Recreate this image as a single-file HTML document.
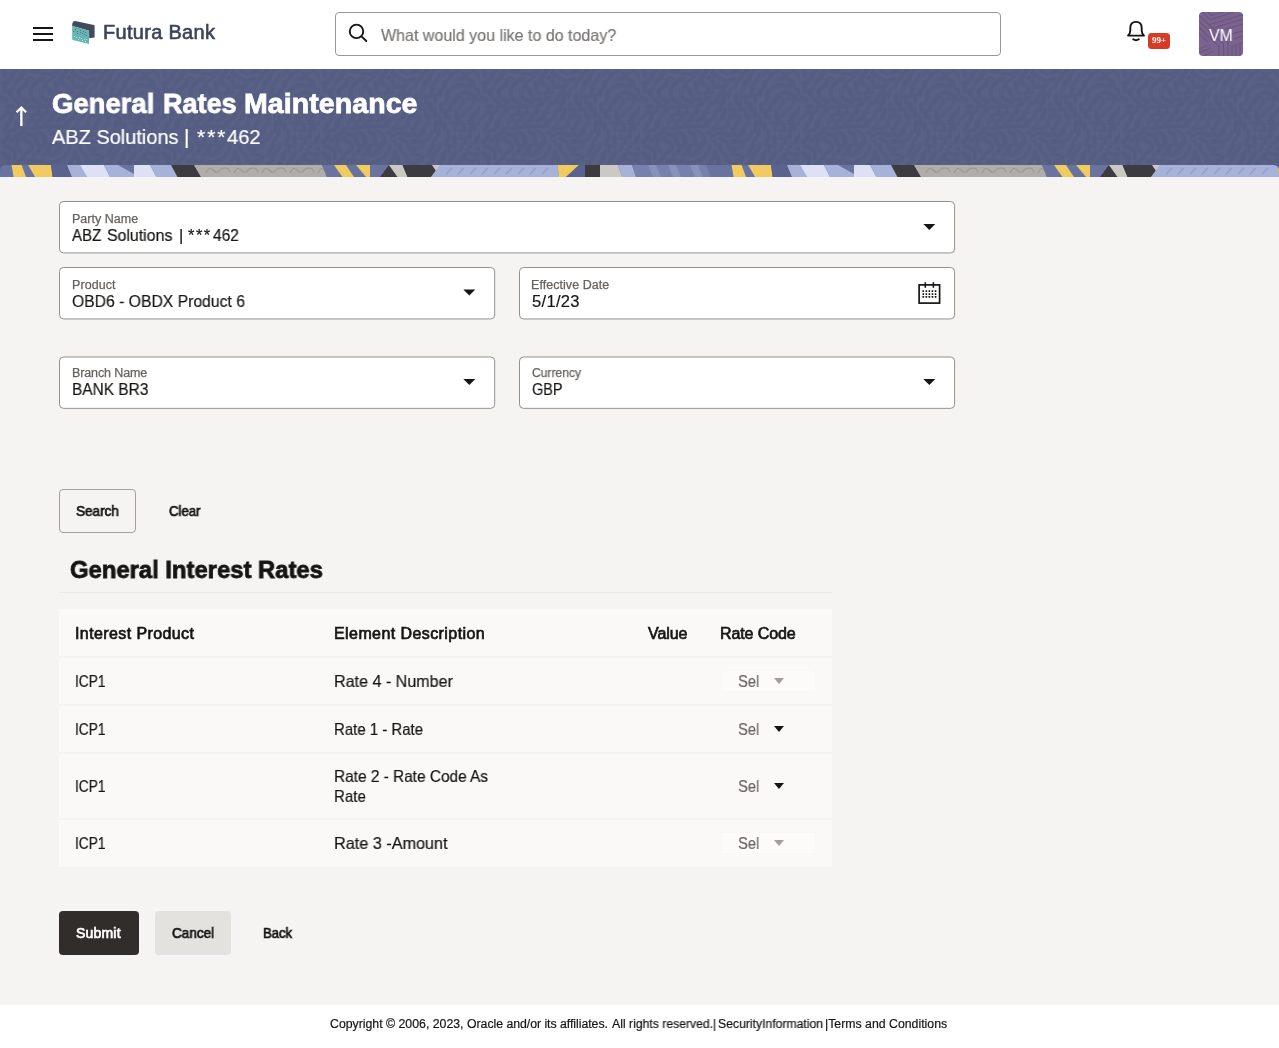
<!DOCTYPE html>
<html lang="en">
<head>
<meta charset="utf-8">
<title>General Rates Maintenance</title>
<style>
*{box-sizing:border-box;margin:0;padding:0}
html,body{width:1279px;height:1048px;overflow:hidden}
body{background:#f5f4f2;font-family:"Liberation Sans",sans-serif;color:#161513;position:relative}
.abs{position:absolute}
.t{position:absolute;white-space:nowrap;line-height:1.2;will-change:transform;transform-origin:0 0}
#hdr{position:absolute;left:0;top:0;width:1279px;height:69px;background:#fff}
.hb{position:absolute;left:33px;width:20px;height:2px;background:#161513}
#search{position:absolute;left:335px;top:12px;width:666px;height:44px;border:1px solid #9a9794;border-radius:4px;background:#fff}
#avatar{position:absolute;left:1199px;top:12px;width:44px;height:44px;border-radius:4px;background:#7b6390;overflow:hidden}
#badge{position:absolute;left:1148px;top:33px;width:22px;height:16px;border-radius:3.5px;background:#d63b25;color:#fff;font-family:"Liberation Serif",serif;font-weight:bold;font-size:9px;line-height:14px;text-align:center;will-change:transform}
#banner{position:absolute;left:0;top:69px;width:1279px;height:108px;background:#585f85}
#strip{position:absolute;left:0;top:165px;width:1279px;height:12px}
.fld{position:absolute;height:52px;border:1px solid #9d9a97;border-right-color:#c4c2bf;border-bottom-color:#d2d0cd;border-radius:4px;background:#fff}
.caret{position:absolute;width:0;height:0;border-left:6px solid transparent;border-right:6px solid transparent;border-top:6px solid #161513}
.btn{position:absolute;height:44px;border-radius:4px}
#tbl{position:absolute;left:59px;top:609px;width:773px;height:258px;background:#fbf9f8}
.ln{position:absolute;left:0;width:773px;height:2px;background:#f5f3f1}
.dis{position:absolute;left:662px;width:95px;height:22px;background:#fcfbfa;outline:1px dotted #f6f5f3;outline-offset:-1px}
#ftr{position:absolute;left:0;top:1005px;width:1279px;height:43px;background:#fff}
</style>
</head>
<body>
<div id="hdr">
  <div class="hb" style="top:27px"></div><div class="hb" style="top:33px"></div><div class="hb" style="top:39px"></div>
  <svg class="abs" style="left:71px;top:20px" width="24" height="24" viewBox="0 0 24 24">
    <path d="M1.2 5 Q1.2 0.9 4.2 0.9 L22.8 5 Q23.6 5.2 23.6 6 L23.6 17.6 L18.2 18.2 L18 10.8 L1.2 5.9 Z" fill="#444a5e"/>
    <path d="M1.2 5.7 L18 10.8 L18 23.9 L2 19.9 Q1.2 19.6 1.2 18.5 Z" fill="#62b7b1"/>
    <g fill="#6b5c9c"><rect x="4" y="9" width="1" height="1"/><rect x="6" y="11" width="1" height="1"/><rect x="9" y="10" width="1" height="1"/><rect x="9" y="12" width="1" height="1"/><rect x="12" y="11" width="1" height="1"/><rect x="14" y="12" width="1" height="1"/><rect x="6" y="13" width="1" height="1"/><rect x="11" y="13" width="1" height="1"/><rect x="13" y="14" width="1" height="1"/><rect x="15" y="15" width="1" height="1"/><rect x="2" y="11" width="1" height="1"/></g>
    <g fill="#d9cdf2"><rect x="3" y="16" width="1" height="1"/><rect x="5" y="17" width="1" height="1"/><rect x="8" y="17" width="1" height="1"/><rect x="10" y="18" width="1" height="1"/><rect x="7" y="19" width="1" height="1"/><rect x="13" y="19" width="1" height="1"/><rect x="15" y="19" width="1" height="1"/><rect x="11" y="20" width="1" height="1"/><rect x="14" y="21" width="1" height="1"/></g>
  </svg>
  <div id="search">
    <svg class="abs" style="left:11px;top:10px" width="22" height="22" viewBox="0 0 22 22" fill="none" stroke="#161513" stroke-width="1.9"><circle cx="9.5" cy="8.4" r="6.75"/><path d="M14.5 13.4 L19.3 18" stroke-linecap="round"/></svg>
  </div>
  <svg class="abs" style="left:1126px;top:20px" width="20" height="22" viewBox="0 0 20 22" fill="none" stroke="#161513" stroke-width="1.9" stroke-linecap="round" stroke-linejoin="round"><path d="M2 15.6 Q4.3 13.5 4.3 10.5 L4.3 8 Q4.3 1.9 10 1.9 Q15.7 1.9 15.7 8 L15.7 10.5 Q15.7 13.5 18 15.6 Z"/><path d="M7.2 19.3 Q10 21.2 12.8 19.3"/></svg>
  <div id="badge">99+</div>
  <div id="avatar"><svg width="44" height="44" viewBox="0 0 44 44" fill="none" stroke="#6b567f" stroke-width="1.2"><path d="M0 3.5 L29 30 L29 44 M0 9.5 L24.5 32 L24.5 44 M0 15.5 L20 34.5 L20 44 M0 21.5 L9 30 M3 0 L11 7.5 L35 0 M9 0 L12 3.5 L24 0 M11 12.5 L44 2.5 M14 16 L44 7 M26 17.5 L44 12 M33 22 L44 18.5 M35 27 L44 24 M33 34.5 L44 30.5 M33 34.5 L33 44 M37 33 L37 44 M41 31.5 L41 44 M0 37 L8.5 33.5 M0 41 L11 36.5 M4 44 L14 39.5"/></svg></div>
</div>
<div id="banner"></div>
<svg class="abs" style="left:0;top:69px" width="1279" height="96"><defs><pattern id="tx" width="160" height="96" patternUnits="userSpaceOnUse"><rect width="160" height="96" fill="#5a6187"/><path d="M4.5 -1.2l-0.1 7.5M15.9 1.1l-4.3 4.9M26.2 2.7l-5.1 1.6M37.6 2.4l-5.5 -0.1M47.6 4.0l-5.6 0.5M58.1 2.0l-7.9 3.5M67.4 -0.6l-4.2 7.6M73.0 1.2l1.3 6.1M81.4 0.6l5.1 3.7M92.4 3.6l7.1 -1.8M102.8 5.6l5.2 -4.9M112.0 4.8l3.4 -4.9M123.6 5.8l3.8 -5.0M132.6 4.9l5.4 -3.3M142.9 3.5l6.0 0.9M152.5 0.3l5.4 6.3M12.9 6.0l-4.5 7.5M22.1 7.8l-6.5 4.5M31.5 9.4l-5.1 1.7M43.8 9.4l-6.6 2.9M54.1 7.3l-5.9 5.0M61.2 7.2l-1.8 6.6M69.0 8.5l4.0 5.6M77.0 7.7l7.1 3.1M86.8 13.2l7.4 -3.5M96.7 12.8l5.2 -5.5M107.2 12.8l2.7 -5.1M116.9 12.7l3.8 -7.0M126.5 12.0l4.7 -4.6M137.7 9.5l6.8 -0.6M146.8 8.9l6.7 4.6M160.7 6.4l0.9 6.6M4.0 13.8l1.2 8.6M15.2 13.6l-2.5 5.5M26.5 14.2l-4.5 5.7M36.7 13.6l-4.8 4.7M46.2 13.3l-3.2 8.0M55.0 13.5l1.2 7.3M62.8 12.8l5.4 6.5M71.8 18.2l8.1 -0.4M82.2 18.2l4.9 -2.7M93.9 18.4l3.0 -4.6M103.1 19.4l2.0 -6.1M112.8 18.7l1.7 -5.5M122.5 19.1l2.7 -4.6M133.5 18.6l5.2 -2.4M141.0 16.4l6.5 0.8M150.7 14.9l6.4 6.0M9.0 21.3l1.8 5.2M18.6 20.5l0.4 6.1M31.1 20.5l-0.1 5.3M40.5 21.3l1.8 5.4M48.3 19.8l3.7 6.1M57.6 24.2l7.6 1.4M66.4 24.1l5.7 -1.0M78.2 27.0l5.3 -6.0M87.9 27.1l3.1 -7.5M101.3 28.9l0.3 -8.1M110.8 27.6l0.4 -6.0M119.3 26.2l1.5 -5.1M126.8 25.9l3.6 -5.0M137.4 26.3l6.4 -2.4M147.1 24.1l8.4 2.2M157.6 21.1l4.1 4.4M0.7 28.5l6.7 3.3M13.3 29.7l5.8 3.8M23.2 29.9l4.4 3.3M31.9 30.0l7.1 3.7M43.0 29.9l5.6 1.7M51.8 30.8l8.1 -0.7M63.7 32.4l5.5 -3.7M75.0 33.9l2.7 -5.1M82.8 34.1l2.2 -8.2M96.0 34.1l-0.2 -8.2M106.8 34.4l-0.6 -6.4M115.1 32.6l0.2 -5.2M125.2 34.5l2.4 -6.7M133.4 33.7l5.8 -6.0M143.1 31.1l5.8 -1.9M150.7 30.0l7.3 0.5M6.5 37.9l5.6 -0.7M17.8 37.3l6.8 0.1M26.9 39.1l6.7 -0.9M37.8 38.4l7.0 -1.5M46.9 37.7l6.4 -2.4M55.8 38.9l6.4 -4.9M67.0 41.0l4.0 -6.7M79.4 40.7l1.5 -6.9M90.2 41.1l-0.0 -5.6M100.6 40.1l-0.8 -6.1M111.2 41.3l-0.7 -7.2M120.6 42.1l0.3 -6.8M129.3 41.1l2.0 -6.8M138.5 40.5l4.1 -5.8M147.1 41.3l5.7 -5.1M158.3 40.0l5.6 -2.5M2.5 48.7l5.4 -6.2M11.1 45.5l5.7 -3.7M21.3 45.2l4.8 -2.7M31.9 47.4l7.2 -4.4M40.8 47.2l6.3 -4.2M50.7 48.3l6.5 -5.7M62.1 48.2l4.2 -5.2M73.1 49.4l3.7 -7.3M83.2 47.8l1.6 -6.9M94.4 47.0l0.3 -6.3M105.9 47.0l-0.4 -7.2M115.0 46.6l-0.3 -6.4M125.3 47.3l0.1 -5.4M135.7 49.5l1.4 -8.6M142.9 46.5l1.9 -5.0M154.2 46.3l3.3 -4.6M7.8 55.9l3.9 -7.1M16.4 53.7l5.7 -6.3M28.0 53.5l4.4 -3.4M35.8 53.6l5.7 -3.5M45.4 54.1l6.7 -3.4M57.6 52.9l6.6 -5.0M65.9 54.3l5.5 -4.0M76.8 54.8l5.4 -6.6M87.8 53.7l2.9 -6.5M98.6 53.3l1.3 -5.6M108.4 53.8l0.5 -6.3M119.5 55.1l-0.1 -6.2M130.1 53.8l-0.2 -6.4M138.5 53.4l0.1 -5.3M150.3 54.4l0.8 -5.8M159.1 55.1l1.6 -5.4M4.7 61.3l2.6 -6.5M13.8 60.7l4.5 -5.4M22.7 60.9l5.6 -3.1M32.4 59.6l7.3 -1.8M42.0 58.2l5.3 -0.8M50.0 57.7l7.8 -1.0M61.5 57.8l5.4 -0.8M72.3 59.8l7.5 -1.4M81.7 59.2l5.4 -3.2M92.7 60.0l4.4 -5.2M102.2 63.2l4.1 -7.7M114.6 61.9l1.1 -8.6M124.5 60.5l-0.2 -5.2M135.1 61.6l-0.9 -7.0M144.3 60.8l-0.5 -5.2M154.0 60.5l0.5 -6.6M6.7 66.4l3.9 -5.0M15.8 66.5l6.7 -2.4M26.9 64.7l7.6 1.5M38.3 63.4l5.7 2.9M48.2 62.1l6.5 4.3M57.0 61.8l6.9 4.4M67.8 63.3l6.7 4.1M77.4 63.8l7.0 0.9M86.0 66.4l8.0 -1.0M97.7 67.9l6.5 -5.3M109.2 68.2l2.8 -5.4M118.1 67.4l1.1 -6.4M128.9 69.5l-0.3 -7.2M140.7 69.2l-0.6 -7.6M149.8 67.9l0.3 -8.1M159.4 68.4l2.8 -6.6M2.2 73.1l6.5 -4.4M11.2 71.2l6.1 -0.6M22.4 69.1l6.6 4.3M35.1 68.9l2.6 6.0M44.6 68.4l0.8 7.9M55.3 69.5l0.1 5.5M63.1 67.5l1.8 7.7M73.2 69.8l2.5 4.6M80.5 69.3l6.4 4.1M92.5 72.6l6.2 -0.5M102.3 73.9l5.5 -4.1M112.4 75.4l2.9 -5.1M126.1 75.6l0.7 -5.2M134.6 77.0l0.6 -8.7M144.4 74.3l0.9 -5.9M154.4 74.4l3.8 -6.2M4.9 77.3l8.1 3.1M17.4 76.4l3.0 6.4M31.9 76.3l-1.5 5.8M42.6 76.5l-2.9 4.4M50.7 76.1l-4.3 5.3M61.0 75.1l-3.2 5.6M70.2 77.1l-1.4 5.0M79.7 77.0l2.2 5.2M87.4 77.5l7.7 3.5M96.1 78.9l6.5 -0.9M109.3 81.4l4.3 -4.8M118.7 80.7l2.1 -5.0M128.0 82.6l1.7 -6.0M140.2 81.0l2.3 -5.7M147.9 80.5l4.2 -5.0M157.3 80.0l8.1 -0.6M2.6 83.4l5.6 6.5M15.1 83.5l0.0 5.4M28.0 82.3l-4.7 6.4M37.8 83.8l-4.6 2.7M49.5 83.5l-6.5 2.4M58.1 83.5l-7.2 3.2M68.8 82.1l-4.7 5.9M75.0 82.5l-1.3 6.5M82.5 82.2l3.0 5.2M93.2 85.3l6.0 0.7M103.3 88.6l5.9 -3.5M112.2 87.0l3.5 -4.3M123.3 87.4l2.5 -5.5M132.1 89.4l4.3 -7.2M143.0 87.3l5.5 -3.8M151.9 85.4l6.4 -0.2M8.6 87.6l0.1 8.7M21.5 89.8l-5.2 5.4M34.1 91.1l-6.0 1.3M42.6 92.2l-6.8 0.0M55.5 92.8l-8.3 1.0M62.1 89.9l-7.2 3.0M72.5 89.0l-2.7 6.8M77.7 88.0l1.6 8.4M86.9 91.9l8.2 2.9M96.4 92.1l5.6 -1.1M107.0 96.0l6.1 -6.1M118.6 96.2l4.2 -6.7M128.3 94.7l3.2 -4.2M137.1 93.9l7.4 -4.2M147.6 91.7l5.6 0.6M156.7 89.9l5.1 5.8" stroke="#565d83" stroke-width="4.6" stroke-linecap="round" fill="none"/></pattern></defs><rect width="1279" height="96" fill="url(#tx)"/></svg>
<svg id="strip" width="1279" height="12" viewBox="0 0 1279 12" preserveAspectRatio="none"><clipPath id="cp"><path d="M0 12 V6 Q0 0 6 0 H1273 Q1279 0 1279 6 V12 Z"/></clipPath><g clip-path="url(#cp)"><g><rect x="0" y="0" width="720" height="12" fill="#6873a0"/><polygon points="11.5,0 21.6,0 26,12 13.6,12" fill="#efcb60"/><polygon points="28.2,0 51,0 52.6,12 35,12" fill="#efcb60"/><polygon points="51,0 67,0 72,12 52.6,12" fill="#59638f"/><polygon points="67,0 80,0 87,12 72,12" fill="#a7b2da"/><polygon points="80,0 104,0 110,12 87,12" fill="#dce1f6"/><polygon points="104,0 134,0 134,12 110,12" fill="#a7b2da"/><polygon points="118,0 134,0 134,9" fill="#6873a0"/><polygon points="134,0 150,0 156.5,12 134,12" fill="#dce1f6"/><polygon points="150,0 172,0 178,12 156.5,12" fill="#a7b2da"/><polygon points="171,0 194,0 201,12 177.5,12" fill="#3b3b40"/><polygon points="194,0 322,0 327,12 201,12" fill="#b1ada9"/><path d="M206 8 q3 -7 7 -3 t6 1 t6 -3 t5 4" fill="none" stroke="#9b9793" stroke-width="1.1"/><path d="M234 8 q3 -7 7 -3 t6 1 t6 -3 t5 4" fill="none" stroke="#9b9793" stroke-width="1.1"/><path d="M262 8 q3 -7 7 -3 t6 1 t6 -3 t5 4" fill="none" stroke="#9b9793" stroke-width="1.1"/><path d="M290 8 q3 -7 7 -3 t6 1 t6 -3 t5 4" fill="none" stroke="#9b9793" stroke-width="1.1"/><path d="M318 8 q3 -7 7 -3 t6 1 t6 -3 t5 4" fill="none" stroke="#9b9793" stroke-width="1.1"/><polygon points="322,0 334,0 342.5,12 327,12" fill="#6873a0"/><polygon points="334,0 346,0 354,12 342.5,12" fill="#efcb60"/><polygon points="356,0 370,0 370,12 366,12" fill="#efcb60"/><polygon points="389,0 397.5,12 380,12" fill="#3b3b40"/><polygon points="389,0 402.5,0 407.5,12 397.5,12" fill="#cbc9c6"/><polygon points="402.5,0 440,0 431,12 407.5,12" fill="#3b3b40"/><polygon points="432,0 441,0 436,6" fill="#cbc9c6"/><polygon points="440,0 557.5,0 559,12 431,12" fill="#a7b2da"/><path d="M446 9 l6 -6" stroke="#8f9bc6" stroke-width="1.2"/><path d="M458 9 l6 -6" stroke="#8f9bc6" stroke-width="1.2"/><path d="M470 9 l6 -6" stroke="#8f9bc6" stroke-width="1.2"/><path d="M482 9 l6 -6" stroke="#8f9bc6" stroke-width="1.2"/><path d="M494 9 l6 -6" stroke="#8f9bc6" stroke-width="1.2"/><path d="M506 9 l6 -6" stroke="#8f9bc6" stroke-width="1.2"/><path d="M518 9 l6 -6" stroke="#8f9bc6" stroke-width="1.2"/><path d="M530 9 l6 -6" stroke="#8f9bc6" stroke-width="1.2"/><path d="M542 9 l6 -6" stroke="#8f9bc6" stroke-width="1.2"/><polygon points="557.5,0 579,0 566,12 559,12" fill="#efcb60"/><polygon points="579,0 585,0 585,12 566,12" fill="#59638f"/><polygon points="585,0 600,0 600,12 585,12" fill="#3b3b40"/><polygon points="600,0 618,0 622,12 600,12" fill="#cbc9c6"/><polygon points="618,0 632,0 636,12 622,12" fill="#a7b2da"/><polygon points="632,0 720,0 720,12 636,12" fill="#7681ad"/><polygon points="648,0 656,0 661,12 653,12" fill="#8791ba"/><polygon points="668,0 676,0 681,12 673,12" fill="#8791ba"/><polygon points="690,0 698,0 703,12 695,12" fill="#8791ba"/><polygon points="706,0 720,0 720,12 711,12" fill="#6873a0"/></g><g transform="translate(720,0)"><rect x="0" y="0" width="720" height="12" fill="#6873a0"/><polygon points="11.5,0 21.6,0 26,12 13.6,12" fill="#efcb60"/><polygon points="28.2,0 51,0 52.6,12 35,12" fill="#efcb60"/><polygon points="51,0 67,0 72,12 52.6,12" fill="#59638f"/><polygon points="67,0 80,0 87,12 72,12" fill="#a7b2da"/><polygon points="80,0 104,0 110,12 87,12" fill="#dce1f6"/><polygon points="104,0 134,0 134,12 110,12" fill="#a7b2da"/><polygon points="118,0 134,0 134,9" fill="#6873a0"/><polygon points="134,0 150,0 156.5,12 134,12" fill="#dce1f6"/><polygon points="150,0 172,0 178,12 156.5,12" fill="#a7b2da"/><polygon points="171,0 194,0 201,12 177.5,12" fill="#3b3b40"/><polygon points="194,0 322,0 327,12 201,12" fill="#b1ada9"/><path d="M206 8 q3 -7 7 -3 t6 1 t6 -3 t5 4" fill="none" stroke="#9b9793" stroke-width="1.1"/><path d="M234 8 q3 -7 7 -3 t6 1 t6 -3 t5 4" fill="none" stroke="#9b9793" stroke-width="1.1"/><path d="M262 8 q3 -7 7 -3 t6 1 t6 -3 t5 4" fill="none" stroke="#9b9793" stroke-width="1.1"/><path d="M290 8 q3 -7 7 -3 t6 1 t6 -3 t5 4" fill="none" stroke="#9b9793" stroke-width="1.1"/><path d="M318 8 q3 -7 7 -3 t6 1 t6 -3 t5 4" fill="none" stroke="#9b9793" stroke-width="1.1"/><polygon points="322,0 334,0 342.5,12 327,12" fill="#6873a0"/><polygon points="334,0 346,0 354,12 342.5,12" fill="#efcb60"/><polygon points="356,0 370,0 370,12 366,12" fill="#efcb60"/><polygon points="389,0 397.5,12 380,12" fill="#3b3b40"/><polygon points="389,0 402.5,0 407.5,12 397.5,12" fill="#cbc9c6"/><polygon points="402.5,0 440,0 431,12 407.5,12" fill="#3b3b40"/><polygon points="432,0 441,0 436,6" fill="#cbc9c6"/><polygon points="440,0 557.5,0 559,12 431,12" fill="#a7b2da"/><path d="M446 9 l6 -6" stroke="#8f9bc6" stroke-width="1.2"/><path d="M458 9 l6 -6" stroke="#8f9bc6" stroke-width="1.2"/><path d="M470 9 l6 -6" stroke="#8f9bc6" stroke-width="1.2"/><path d="M482 9 l6 -6" stroke="#8f9bc6" stroke-width="1.2"/><path d="M494 9 l6 -6" stroke="#8f9bc6" stroke-width="1.2"/><path d="M506 9 l6 -6" stroke="#8f9bc6" stroke-width="1.2"/><path d="M518 9 l6 -6" stroke="#8f9bc6" stroke-width="1.2"/><path d="M530 9 l6 -6" stroke="#8f9bc6" stroke-width="1.2"/><path d="M542 9 l6 -6" stroke="#8f9bc6" stroke-width="1.2"/><polygon points="557.5,0 579,0 566,12 559,12" fill="#efcb60"/><polygon points="579,0 585,0 585,12 566,12" fill="#59638f"/><polygon points="585,0 600,0 600,12 585,12" fill="#3b3b40"/><polygon points="600,0 618,0 622,12 600,12" fill="#cbc9c6"/><polygon points="618,0 632,0 636,12 622,12" fill="#a7b2da"/><polygon points="632,0 720,0 720,12 636,12" fill="#7681ad"/><polygon points="648,0 656,0 661,12 653,12" fill="#8791ba"/><polygon points="668,0 676,0 681,12 673,12" fill="#8791ba"/><polygon points="690,0 698,0 703,12 695,12" fill="#8791ba"/><polygon points="706,0 720,0 720,12 711,12" fill="#6873a0"/></g></g></svg>
<svg class="abs" style="left:13px;top:105px" width="17" height="23" viewBox="0 0 17 23" fill="none" stroke="#fff" stroke-width="2.3"><path d="M8.35 21 L8.35 3 M3.6 7.3 L8.35 2.55 L13.1 7.3"/></svg>

<svg class="abs" style="left:0;top:190px" width="1279" height="230" viewBox="0 190 1279 230"><rect x="59.5" y="201.5" width="895.1" height="51.45" rx="4" fill="#fff" stroke="#94918e"/><rect x="59.5" y="267.5" width="435.2" height="51.45" rx="4" fill="#fff" stroke="#94918e"/><rect x="519.5" y="267.5" width="435.1" height="51.45" rx="4" fill="#fff" stroke="#94918e"/><rect x="59.5" y="357.0" width="435.2" height="51.35" rx="4" fill="#fff" stroke="#94918e"/><rect x="519.5" y="357.0" width="435.1" height="51.35" rx="4" fill="#fff" stroke="#94918e"/><path d="M923.3 223.9 h12 l-6 6 z" fill="#161513"/><path d="M463.3 289.6 h12 l-6 6 z" fill="#161513"/><path d="M463.3 378.9 h12 l-6 6 z" fill="#161513"/><path d="M923.3 378.9 h12 l-6 6 z" fill="#161513"/><g transform="translate(916,280)" fill="none" stroke="#161513"><rect x="3.1" y="4.9" width="20.5" height="18.2" stroke-width="1.7"/><path d="M9.3 2.2 V7.8 M17.4 2.2 V7.8" stroke-width="1.6"/><g fill="#161513" stroke="none"><rect x="6.4" y="10.2" width="1.7" height="1.7" rx="0.4"/><rect x="9.5" y="10.2" width="1.7" height="1.7" rx="0.4"/><rect x="12.5" y="10.2" width="1.7" height="1.7" rx="0.4"/><rect x="15.6" y="10.2" width="1.7" height="1.7" rx="0.4"/><rect x="18.7" y="10.2" width="1.7" height="1.7" rx="0.4"/><rect x="6.4" y="13.2" width="1.7" height="1.7" rx="0.4"/><rect x="9.5" y="13.2" width="1.7" height="1.7" rx="0.4"/><rect x="12.5" y="13.2" width="1.7" height="1.7" rx="0.4"/><rect x="15.6" y="13.2" width="1.7" height="1.7" rx="0.4"/><rect x="18.7" y="13.2" width="1.7" height="1.7" rx="0.4"/><rect x="6.4" y="16.1" width="1.7" height="1.7" rx="0.4"/><rect x="9.5" y="16.1" width="1.7" height="1.7" rx="0.4"/><rect x="12.5" y="16.1" width="1.7" height="1.7" rx="0.4"/><rect x="15.6" y="16.1" width="1.7" height="1.7" rx="0.4"/><rect x="18.7" y="16.1" width="1.7" height="1.7" rx="0.4"/></g></g></svg>

<div class="btn" style="left:59px;top:489px;width:77px;border:1px solid #a3a09d"></div>
<div class="abs" style="left:59px;top:592px;width:773px;height:1px;background:#ebe9e6"></div>
<div id="tbl">
  <div class="ln" style="top:47px"></div><div class="ln" style="top:95px"></div><div class="ln" style="top:143px"></div><div class="ln" style="top:209px"></div><div class="dis" style="top:61px"></div><div class="dis" style="top:223px"></div>
  <i class="caret" style="left:714.6px;top:69px;border-top-color:#a19e9b;border-left-width:5.75px;border-right-width:5.75px;border-top-width:6.5px"></i>
  <i class="caret" style="left:714.6px;top:117px;border-left-width:5.75px;border-right-width:5.75px;border-top-width:6.5px"></i>
  <i class="caret" style="left:714.6px;top:174px;border-left-width:5.75px;border-right-width:5.75px;border-top-width:6.5px"></i>
  <i class="caret" style="left:714.6px;top:231px;border-top-color:#a19e9b;border-left-width:5.75px;border-right-width:5.75px;border-top-width:6.5px"></i>
</div>
<div class="btn" style="left:59px;top:911px;width:80px;background:#312d2a"></div>
<div class="btn" style="left:155px;top:911px;width:76px;background:#e4e2df"></div>
<div id="ftr"></div>
<span class="t" id="brand" style="left:103.0px;top:20px;font-size:20px;color:#3d4358;letter-spacing:0.300px;-webkit-text-stroke:0.6px #3d4358;">Futura Bank</span>
<span class="t" id="ph" style="left:381.0px;top:26px;font-size:16.5px;color:#7a7775;transform:scaleX(0.9714);-webkit-text-stroke:0.2px #7a7775;">What would you like to do today?</span>
<span class="t" id="vm" style="left:1209.0px;top:26px;font-size:16.5px;color:#fff;transform:scaleX(0.9612);">VM</span>
<span class="t" id="title1" style="left:52.0px;top:86px;font-size:28.5px;color:#fff;font-weight:bold;transform:scaleX(0.9638);-webkit-text-stroke:0.8px #fff;">General</span>
<span class="t" id="title2" style="left:162.5px;top:86px;font-size:28.5px;color:#fff;font-weight:bold;transform:scaleX(0.9474);-webkit-text-stroke:0.8px #fff;">Rates</span>
<span class="t" id="title3" style="left:244.0px;top:86px;font-size:28.5px;color:#fff;font-weight:bold;letter-spacing:0.080px;-webkit-text-stroke:0.8px #fff;">Maintenance</span>
<span class="t" id="sub1" style="left:52.0px;top:124px;font-size:21px;color:#fff;transform:scaleX(0.9504);-webkit-text-stroke:0.2px #fff;">ABZ Solutions</span>
<span class="t" id="sub2" style="left:184.0px;top:124px;font-size:21px;color:#fff;-webkit-text-stroke:0.2px #fff;">|</span>
<span class="t" id="sub3" style="left:197.0px;top:124px;font-size:21px;color:#fff;letter-spacing:2.000px;-webkit-text-stroke:0.2px #fff;">***</span>
<span class="t" id="sub4" style="left:227.0px;top:124px;font-size:21px;color:#fff;transform:scaleX(0.9596);-webkit-text-stroke:0.2px #fff;">462</span>
<span class="t" id="l1" style="left:72.0px;top:212px;font-size:12.5px;color:#66625e;letter-spacing:0.022px;-webkit-text-stroke:0.25px #66625e;">Party Name</span>
<span class="t" id="v1a" style="left:72.0px;top:226px;font-size:16.5px;color:#161513;transform:scaleX(0.9139);-webkit-text-stroke:0.2px #161513;">ABZ</span>
<span class="t" id="v1b" style="left:107.0px;top:226px;font-size:16.5px;color:#161513;transform:scaleX(0.9619);-webkit-text-stroke:0.2px #161513;">Solutions</span>
<span class="t" id="v1c" style="left:179.0px;top:226px;font-size:16.5px;color:#161513;-webkit-text-stroke:0.2px #161513;">|</span>
<span class="t" id="v1d" style="left:188.0px;top:226px;font-size:16.5px;color:#161513;letter-spacing:1.500px;-webkit-text-stroke:0.2px #161513;">***</span>
<span class="t" id="v1e" style="left:213.0px;top:226px;font-size:16.5px;color:#161513;transform:scaleX(0.9417);-webkit-text-stroke:0.2px #161513;">462</span>
<span class="t" id="l2" style="left:72.0px;top:278px;font-size:12.5px;color:#66625e;letter-spacing:0.065px;-webkit-text-stroke:0.25px #66625e;">Product</span>
<span class="t" id="v2" style="left:72.0px;top:292px;font-size:16.5px;color:#161513;transform:scaleX(0.9523);-webkit-text-stroke:0.2px #161513;">OBD6 - OBDX Product 6</span>
<span class="t" id="l3" style="left:531.0px;top:278px;font-size:12.5px;color:#66625e;letter-spacing:0.051px;-webkit-text-stroke:0.25px #66625e;">Effective Date</span>
<span class="t" id="v3" style="left:532.0px;top:292px;font-size:16.5px;color:#161513;letter-spacing:0.320px;-webkit-text-stroke:0.2px #161513;">5/1/23</span>
<span class="t" id="l4" style="left:72.0px;top:366px;font-size:12.5px;color:#66625e;letter-spacing:-0.120px;-webkit-text-stroke:0.25px #66625e;">Branch Name</span>
<span class="t" id="v4" style="left:72.0px;top:380px;font-size:16.5px;color:#161513;transform:scaleX(0.9354);-webkit-text-stroke:0.2px #161513;">BANK BR3</span>
<span class="t" id="l5" style="left:532.0px;top:366px;font-size:12.5px;color:#66625e;transform:scaleX(0.9652);-webkit-text-stroke:0.25px #66625e;">Currency</span>
<span class="t" id="v5" style="left:532.0px;top:380px;font-size:16.5px;color:#161513;transform:scaleX(0.8780);-webkit-text-stroke:0.2px #161513;">GBP</span>
<span class="t" id="bsearch" style="left:76.0px;top:503px;font-size:14px;color:#161513;transform:scaleX(0.9666);-webkit-text-stroke:0.7px #161513;">Search</span>
<span class="t" id="bclear" style="left:169.0px;top:503px;font-size:14px;color:#161513;transform:scaleX(0.9412);-webkit-text-stroke:0.7px #161513;">Clear</span>
<span class="t" id="h2" style="left:70.0px;top:555px;font-size:24.5px;color:#161513;font-weight:bold;transform:scaleX(0.9724);-webkit-text-stroke:0.8px #161513;">General Interest Rates</span>
<span class="t" id="th1" style="left:74.5px;top:624px;font-size:16px;color:#161513;letter-spacing:0.400px;-webkit-text-stroke:0.7px #161513;">Interest Product</span>
<span class="t" id="th2" style="left:334.0px;top:624px;font-size:16px;color:#161513;letter-spacing:0.417px;-webkit-text-stroke:0.7px #161513;">Element Description</span>
<span class="t" id="th3" style="left:648.0px;top:624px;font-size:16px;color:#161513;letter-spacing:-0.100px;-webkit-text-stroke:0.7px #161513;">Value</span>
<span class="t" id="th4" style="left:720.0px;top:624px;font-size:16px;color:#161513;letter-spacing:-0.100px;-webkit-text-stroke:0.7px #161513;">Rate Code</span>
<span class="t" id="r1a" style="left:74.5px;top:672px;font-size:16.5px;color:#161513;transform:scaleX(0.8299);-webkit-text-stroke:0.2px #161513;">ICP1</span>
<span class="t" id="r1b" style="left:334.0px;top:672px;font-size:16.5px;color:#161513;transform:scaleX(0.9752);-webkit-text-stroke:0.2px #161513;">Rate 4 - Number</span>
<span class="t" id="r1c" style="left:738.0px;top:672px;font-size:16.5px;color:#6b6764;transform:scaleX(0.8893);-webkit-text-stroke:0.2px #6b6764;">Sel</span>
<span class="t" id="r2a" style="left:74.5px;top:720px;font-size:16.5px;color:#161513;transform:scaleX(0.8299);-webkit-text-stroke:0.2px #161513;">ICP1</span>
<span class="t" id="r2b" style="left:334.0px;top:720px;font-size:16.5px;color:#161513;transform:scaleX(0.9072);-webkit-text-stroke:0.2px #161513;">Rate 1 - Rate</span>
<span class="t" id="r2c" style="left:738.0px;top:720px;font-size:16.5px;color:#6b6764;transform:scaleX(0.8893);-webkit-text-stroke:0.2px #6b6764;">Sel</span>
<span class="t" id="r3a" style="left:74.5px;top:777px;font-size:16.5px;color:#161513;transform:scaleX(0.8299);-webkit-text-stroke:0.2px #161513;">ICP1</span>
<span class="t" id="r3b" style="left:334.0px;top:767px;font-size:16.5px;color:#161513;transform:scaleX(0.9332);-webkit-text-stroke:0.2px #161513;">Rate 2 - Rate Code As</span>
<span class="t" id="r3b2" style="left:334.0px;top:787px;font-size:16.5px;color:#161513;transform:scaleX(0.9129);-webkit-text-stroke:0.2px #161513;">Rate</span>
<span class="t" id="r3c" style="left:738.0px;top:777px;font-size:16.5px;color:#6b6764;transform:scaleX(0.8893);-webkit-text-stroke:0.2px #6b6764;">Sel</span>
<span class="t" id="r4a" style="left:74.5px;top:834px;font-size:16.5px;color:#161513;transform:scaleX(0.8299);-webkit-text-stroke:0.2px #161513;">ICP1</span>
<span class="t" id="r4b" style="left:334.0px;top:834px;font-size:16.5px;color:#161513;transform:scaleX(0.9826);-webkit-text-stroke:0.2px #161513;">Rate 3 -Amount</span>
<span class="t" id="r4c" style="left:738.0px;top:834px;font-size:16.5px;color:#6b6764;transform:scaleX(0.8893);-webkit-text-stroke:0.2px #6b6764;">Sel</span>
<span class="t" id="bsubmit" style="left:76.0px;top:925px;font-size:14px;color:#fff;letter-spacing:0.200px;-webkit-text-stroke:0.7px #fff;">Submit</span>
<span class="t" id="bcancel" style="left:172.0px;top:925px;font-size:14px;color:#161513;transform:scaleX(0.9661);-webkit-text-stroke:0.7px #161513;">Cancel</span>
<span class="t" id="bback" style="left:263.0px;top:925px;font-size:14px;color:#161513;transform:scaleX(0.9375);-webkit-text-stroke:0.7px #161513;">Back</span>
<span class="t" id="foot1" style="left:330.0px;top:1017px;font-size:12.3px;color:#161513;-webkit-text-stroke:0.2px #161513;">Copyright © 2006, 2023,</span>
<span class="t" id="foot2" style="left:467.0px;top:1017px;font-size:12.3px;color:#161513;letter-spacing:-0.036px;-webkit-text-stroke:0.2px #161513;">Oracle and/or its affiliates.</span>
<span class="t" id="foot3" style="left:612.0px;top:1017px;font-size:12.3px;color:#161513;transform:scaleX(0.9930);-webkit-text-stroke:0.2px #161513;">All rights reserved.|</span>
<span class="t" id="foot4" style="left:718.0px;top:1017px;font-size:12.3px;color:#161513;transform:scaleX(0.9924);-webkit-text-stroke:0.2px #161513;">SecurityInformation</span>
<span class="t" id="foot5" style="left:825.0px;top:1017px;font-size:12.3px;color:#161513;transform:scaleX(0.9987);-webkit-text-stroke:0.2px #161513;">|Terms and Conditions</span>
</body>
</html>
